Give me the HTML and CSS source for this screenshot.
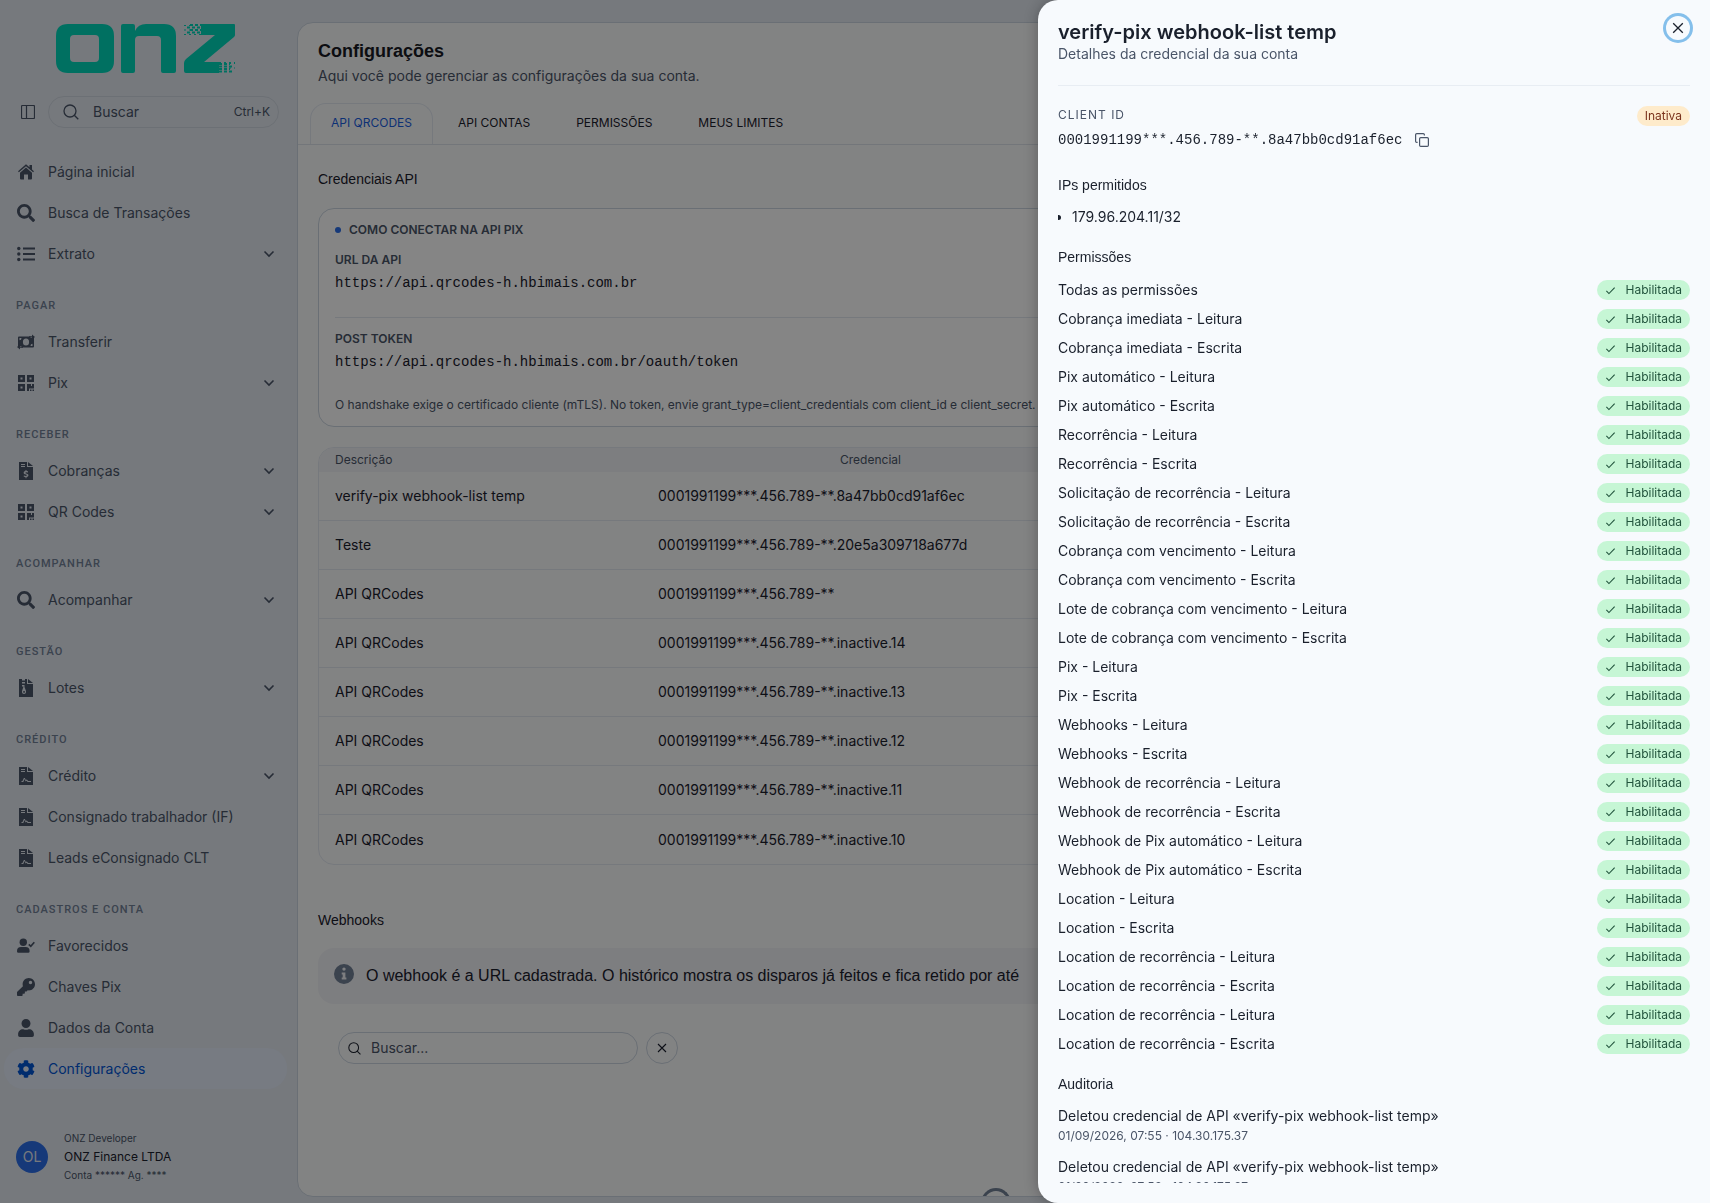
FILE: index.html
```html
<!DOCTYPE html>
<html lang="pt-BR">
<head>
<meta charset="utf-8">
<title>Configurações</title>
<meta name="viewport" content="width=device-width, initial-scale=1">
<link rel="stylesheet" href="styles.css">
</head>
<body>
<svg class="sprite" aria-hidden="true">
  <symbol id="i-search" viewBox="0 0 512 512"><path d="M505 442.700L405.300 343c-4.500-4.500-10.600-7-17-7H372c27.600-35.300 44-79.700 44-128C416 93.100 322.900 0 208 0S0 93.100 0 208s93.100 208 208 208c48.300 0 92.700-16.400 128-44v16.300c0 6.400 2.500 12.500 7 17l99.700 99.700c9.400 9.400 24.600 9.400 33.900 0l28.300-28.300c9.400-9.400 9.400-24.600.1-34zM208 336c-70.700 0-128-57.200-128-128 0-70.700 57.200-128 128-128 70.700 0 128 57.200 128 128 0 70.700-57.200 128-128 128z"/></symbol>
  <symbol id="i-home" viewBox="0 0 18 18"><path d="M9 1.300 1 8.300l.9 1L9 3.200l7.100 6.100.9-1-2-1.800V2h-2.500v2.300z"/><path d="M9 4.500 3 9.700V15.500q0 1 1 1h3v-5h4v5h3q1 0 1-1V9.700z"/></symbol>
  <symbol id="i-list" viewBox="0 0 18 18"><circle cx="1.800" cy="3.500" r="1.700"/><circle cx="1.800" cy="9" r="1.700"/><circle cx="1.800" cy="14.500" r="1.700"/><path d="M6 2.500h12v2H6zM6 8h12v2H6zM6 13.500h12v2H6z"/></symbol>
  <symbol id="i-transfer" viewBox="0 0 18 18"><path fill-rule="evenodd" d="M1 4.500q0-1 1-1h11.500V5H16V3.500l1 .5v9.500q0 1-1 1H4.500V13H2v1.500l-1-.5zm8 1A3.100 3.500 0 1 0 9 12.500 3.100 3.500 0 1 0 9 5.500zM2.500 5v2.200q2 0 2-2.200zM15.500 13v-2.200q-2 0-2 2.200z"/><path d="M15 1.500 18 4l-3 2.300V4.600H12V3.200h3zM3 16.500 0 14l3-2.300v1.700h3v1.400H3z"/></symbol>
  <symbol id="i-qr" viewBox="0 0 18 18"><path fill-rule="evenodd" d="M1 1h7v7H1zm2.500 2.500v2h2v-2zM10 1h7v7h-7zm2.500 2.500v2h2v-2zM1 10h7v7H1zm2.500 2.500v2h2v-2zM10 10h4v2h1v-2h2v4.500h-5V17h-2zM13 15.500h1.500V17H13zM15.500 15.500H17V17h-1.500z"/></symbol>
  <symbol id="i-bill" viewBox="0 0 18 18"><path fill-rule="evenodd" d="M2 0h8v5h6v13H2zM11 0l5 4h-5zM4 2v1h4V2zM4 4v1h4V4zM8.500 8v1Q6.500 9.200 6.600 11q.1 1 2.200 1.500 1.200.3 1 .9-.3.900-3 .1v1.200l1.700.4v1.200h1v-1.200q2-.2 2-2-.1-1.100-2.200-1.600-1.100-.3-1-.8.200-.8 2.700-.1V9.300L9.500 9V8z"/></symbol>
  <symbol id="i-zip" viewBox="0 0 18 18"><path fill-rule="evenodd" d="M2 0h3v1.500h1.500V3H5v1.500h1.500V6H5v1.500h1.500L5 12q-.3 3 2 3t2-3L7.500 8V6H6.500V4.500H8V3H6.500V1.500H8V0h2v5h6v13H2zM11 0l5 4h-5zM6.300 12h1.500v1.700H6.300z"/></symbol>
  <symbol id="i-contract" viewBox="0 0 18 18"><path fill-rule="evenodd" d="M2 0h8v5h6v13H2zM11 0l5 4h-5zM4 2v1h4V2zM4 4v1h4V4zM4.500 14v1h1.800l1.200-3 1.200 2.600.9-.8 1 1.200H14v-1h-2.800l-1.400-1.500-1 .6-1-2.100h-.9L5.500 14z"/></symbol>
  <symbol id="i-usercheck" viewBox="0 0 18 18"><circle cx="6.300" cy="5.300" r="3.700"/><path d="M4 10h4.700q3.900.2 3.900 4v.4q0 1.400-1.400 1.400H1.400Q0 15.800 0 14.400V14q0-3.800 4-4z"/><path d="m11.800 7.300 2 2L17.300 5.200" fill="none" stroke="currentColor" stroke-width="1.700"/></symbol>
  <symbol id="i-key" viewBox="0 0 512 512"><path d="M512 176C512 273.200 433.200 352 336 352c-11.200 0-22.200-1.100-32.800-3.100l-24 27A24 24 0 0 1 261.200 384H224v40c0 13.300-10.700 24-24 24h-40v40c0 13.300-10.700 24-24 24H24c-13.300 0-24-10.700-24-24v-78c0-6.400 2.500-12.500 7-17l161.800-161.800C163.100 213.800 160 195.300 160 176 160 78.800 238.800 0 336 0 433.500 0 512 78.500 512 176zM336 128c0 26.500 21.500 48 48 48s48-21.500 48-48-21.500-48-48-48-48 21.500-48 48z"/></symbol>
  <symbol id="i-user" viewBox="0 0 448 512"><path d="M224 256c70.700 0 128-57.300 128-128S294.700 0 224 0 96 57.300 96 128s57.300 128 128 128zm89.600 32h-16.700c-22.200 10.200-46.900 16-72.900 16s-50.600-5.800-72.900-16h-16.700C60.200 288 0 348.200 0 422.400V464c0 26.500 21.500 48 48 48h352c26.500 0 48-21.500 48-48v-41.600c0-74.200-60.200-134.400-134.400-134.400z"/></symbol>
  <symbol id="i-cog" viewBox="0 0 512 512"><path d="M487.400 315.700l-42.600-24.600c4.300-23.200 4.300-47 0-70.200l42.600-24.600c4.900-2.800 7.100-8.600 5.500-14-11.100-35.600-30-67.800-54.700-94.600-3.800-4.100-10-5.100-14.800-2.300L380.800 110c-17.900-15.400-38.500-27.300-60.800-35.100V25.800c0-5.600-3.900-10.500-9.400-11.700-36.700-8.200-74.300-7.800-109.200 0-5.500 1.200-9.400 6.100-9.400 11.700V75c-22.200 7.900-42.800 19.800-60.800 35.100L88.700 85.500c-4.900-2.800-11-1.900-14.800 2.300-24.700 26.700-43.600 58.900-54.700 94.600-1.700 5.400.6 11.200 5.500 14L67.300 221c-4.300 23.200-4.300 47 0 70.200l-42.600 24.600c-4.900 2.800-7.100 8.600-5.500 14 11.100 35.600 30 67.800 54.700 94.600 3.800 4.100 10 5.100 14.800 2.300l42.600-24.600c17.900 15.400 38.500 27.300 60.800 35.100v49.200c0 5.600 3.900 10.500 9.400 11.700 36.700 8.200 74.300 7.800 109.200 0 5.500-1.200 9.400-6.100 9.400-11.700v-49.200c22.200-7.900 42.800-19.800 60.800-35.100l42.600 24.600c4.900 2.800 11 1.900 14.800-2.300 24.700-26.700 43.600-58.900 54.700-94.600 1.500-5.500-.7-11.300-5.600-14.100zM256 336c-44.100 0-80-35.900-80-80s35.900-80 80-80 80 35.900 80 80-35.900 80-80 80z"/></symbol>
  <symbol id="i-chevron" viewBox="0 0 12 12"><path d="m1.500 3.500 4.500 4.500 4.500-4.500" fill="none" stroke="currentColor" stroke-width="1.600"/></symbol>
  <symbol id="i-lens" viewBox="0 0 16 16"><g fill="none" stroke="currentColor" stroke-width="1.300"><circle cx="7" cy="7" r="6"/><path d="m11.300 11.300 4 4"/></g></symbol>
  <symbol id="i-x" viewBox="0 0 12 12"><path d="m1.200 1.200 9.600 9.600m0-9.600-9.600 9.600" fill="none" stroke="currentColor" stroke-width="1.300"/></symbol>
  <symbol id="i-check" viewBox="0 0 12 12"><path d="m1.500 6.500 2.800 2.800 6.200-6.500" fill="none" stroke="currentColor" stroke-width="1.200"/></symbol>
</svg>

<div class="app">
  <aside class="sidebar">
    <svg class="logo" viewBox="0 0 180 49" role="img" aria-label="onz">
      <path fill-rule="evenodd" d="M12 0H46Q58 0 58 12V37Q58 49 46 49H12Q0 49 0 37V12Q0 0 12 0zM18 11Q14 11 14 15V34Q14 38 18 38H39Q43 38 43 34V15Q43 11 39 11z"/>
      <path d="M67 0H77Q79 0 79 2V7Q82 0 90 0H108Q120 0 120 12V47Q120 49 118 49H107Q105 49 105 47V16Q105 12 101 12H83Q79 12 79 16V47Q79 49 77 49H67Q65 49 65 47V2Q65 0 67 0z"/>
      <path d="M145 0H178Q179 0 179 1V11Q179 12 178 13L148 38H163V49H130Q128 49 128 47V39Q128 37 130 35L159 11H145z"/>
      <path class="dots" d="M134 1H146M131 3.500H146M134 6H146M131 8.500H146M163 40H174M163 42.500H177M163 45H174M163 47.500H177"/>
      <path class="dots sparse" d="M128 1.500H134M128 6H134M128 10.500H146M173 39.500H179M173 44H179M163 38.500H179"/>
    </svg>
    <div class="sidebar-tools">
      <button class="icon-btn" aria-label="Recolher menu"><svg class="line" width="14" height="14" viewBox="0 0 14 14"><rect x=".5" y=".5" width="13" height="13" rx="1"/><path d="M5.500 0v14"/></svg></button>
      <button class="quick-search"><svg width="16" height="16"><use href="#i-lens"/></svg><span class="quick-label">Buscar</span><kbd>Ctrl+K</kbd></button>
    </div>
    <nav class="menu">
      <a class="item" href="#"><svg><use href="#i-home"/></svg>Página inicial</a>
      <a class="item" href="#"><svg><use href="#i-search"/></svg>Busca de Transações</a>
      <a class="item" href="#"><svg><use href="#i-list"/></svg>Extrato<svg class="chev"><use href="#i-chevron"/></svg></a>
      <h2 class="group">PAGAR</h2>
      <a class="item" href="#"><svg><use href="#i-transfer"/></svg>Transferir</a>
      <a class="item" href="#"><svg><use href="#i-qr"/></svg>Pix<svg class="chev"><use href="#i-chevron"/></svg></a>
      <h2 class="group">RECEBER</h2>
      <a class="item" href="#"><svg><use href="#i-bill"/></svg>Cobranças<svg class="chev"><use href="#i-chevron"/></svg></a>
      <a class="item" href="#"><svg><use href="#i-qr"/></svg>QR Codes<svg class="chev"><use href="#i-chevron"/></svg></a>
      <h2 class="group">ACOMPANHAR</h2>
      <a class="item" href="#"><svg><use href="#i-search"/></svg>Acompanhar<svg class="chev"><use href="#i-chevron"/></svg></a>
      <h2 class="group">GESTÃO</h2>
      <a class="item" href="#"><svg><use href="#i-zip"/></svg>Lotes<svg class="chev"><use href="#i-chevron"/></svg></a>
      <h2 class="group">CRÉDITO</h2>
      <a class="item" href="#"><svg><use href="#i-contract"/></svg>Crédito<svg class="chev"><use href="#i-chevron"/></svg></a>
      <a class="item" href="#"><svg><use href="#i-contract"/></svg>Consignado trabalhador (IF)</a>
      <a class="item" href="#"><svg><use href="#i-contract"/></svg>Leads eConsignado CLT</a>
      <h2 class="group">CADASTROS E CONTA</h2>
      <a class="item" href="#"><svg><use href="#i-usercheck"/></svg>Favorecidos</a>
      <a class="item" href="#"><svg><use href="#i-key"/></svg>Chaves Pix</a>
      <a class="item" href="#"><svg><use href="#i-user"/></svg>Dados da Conta</a>
      <a class="item active" href="#" aria-current="page"><svg><use href="#i-cog"/></svg>Configurações</a>
    </nav>
    <div class="account">
      <span class="avatar">OL</span>
      <div class="account-text">
        <span class="account-small">ONZ Developer</span>
        <span class="account-name">ONZ Finance LTDA</span>
        <span class="account-small">Conta ****** Ag. ****</span>
      </div>
    </div>
  </aside>

  <main class="content">
    <header class="page-head">
      <h1>Configurações</h1>
      <p>Aqui você pode gerenciar as configurações da sua conta.</p>
    </header>
    <div class="tabs" role="tablist">
      <button class="tab selected" role="tab" aria-selected="true">API QRCODES</button>
      <button class="tab" role="tab">API CONTAS</button>
      <button class="tab" role="tab">PERMISSÕES</button>
      <button class="tab" role="tab">MEUS LIMITES</button>
    </div>
    <section class="section">
      <h3 class="section-title">Credenciais API</h3>
      <div class="connect">
        <h4 class="connect-title">COMO CONECTAR NA API PIX</h4>
        <h5 class="connect-label">URL DA API</h5>
        <code>https://api.qrcodes-h.hbimais.com.br</code>
        <hr>
        <h5 class="connect-label">POST TOKEN</h5>
        <code>https://api.qrcodes-h.hbimais.com.br/oauth/token</code>
        <p class="connect-note">O handshake exige o certificado cliente (mTLS). No token, envie grant_type=client_credentials com client_id e client_secret.</p>
      </div>
      <div class="table-wrap">
        <table>
          <thead><tr><th class="col-desc">Descrição</th><th class="col-cred">Credencial</th><th></th></tr></thead>
          <tbody>
            <tr><td>verify-pix webhook-list temp</td><td>0001991199***.456.789-**.8a47bb0cd91af6ec</td><td></td></tr>
            <tr><td>Teste</td><td>0001991199***.456.789-**.20e5a309718a677d</td><td></td></tr>
            <tr><td>API QRCodes</td><td>0001991199***.456.789-**</td><td></td></tr>
            <tr><td>API QRCodes</td><td>0001991199***.456.789-**.inactive.14</td><td></td></tr>
            <tr><td>API QRCodes</td><td>0001991199***.456.789-**.inactive.13</td><td></td></tr>
            <tr><td>API QRCodes</td><td>0001991199***.456.789-**.inactive.12</td><td></td></tr>
            <tr><td>API QRCodes</td><td>0001991199***.456.789-**.inactive.11</td><td></td></tr>
            <tr><td>API QRCodes</td><td>0001991199***.456.789-**.inactive.10</td><td></td></tr>
          </tbody>
        </table>
      </div>
    </section>
    <section class="section webhooks">
      <h3 class="section-title">Webhooks</h3>
      <div class="notice">
        <svg width="20" height="20" viewBox="0 0 20 20"><path fill-rule="evenodd" d="M10 0a10 10 0 1 0 0 20 10 10 0 1 0 0-20zM10 3.400a1.700 1.700 0 1 1 0 3.400 1.700 1.700 0 1 1 0-3.400zM7.700 8.500h3.700v5h1v2H7.700v-2h1v-3h-1z"/></svg>
        <p>O webhook é a URL cadastrada. O histórico mostra os disparos já feitos e fica retido por até</p>
      </div>
      <div class="filter">
        <label class="filter-field"><svg width="13" height="13"><use href="#i-lens"/></svg><input type="text" placeholder="Buscar..." aria-label="Buscar webhooks"></label>
        <button class="round" aria-label="Limpar busca"><svg width="10" height="10"><use href="#i-x"/></svg></button>
      </div>
      <div class="spinner" role="status" aria-label="Carregando"></div>
    </section>
  </main>
</div>

<div class="overlay"></div>

<aside class="drawer" role="dialog" aria-modal="true" aria-labelledby="drawer-title">
  <header class="drawer-head">
    <div>
      <h2 id="drawer-title">verify-pix webhook-list temp</h2>
      <p>Detalhes da credencial da sua conta</p>
    </div>
    <button class="close" aria-label="Fechar"><svg width="12" height="12"><use href="#i-x"/></svg></button>
  </header>
  <div class="drawer-body">
    <div class="client">
      <div>
        <span class="client-label">CLIENT ID</span>
        <div class="client-row"><code>0001991199***.456.789-**.8a47bb0cd91af6ec</code><button class="icon-btn" aria-label="Copiar"><svg class="line" width="14" height="14" viewBox="0 0 14 14"><rect x="4.600" y="4.600" width="8.800" height="8.800" rx="1.200"/><path d="M2.600 9.400H1.800q-1.200 0-1.200-1.200V1.800q0-1.200 1.200-1.200h6.400q1.200 0 1.200 1.200v.8"/></svg></button></div>
      </div>
      <span class="badge warn">Inativa</span>
    </div>
    <h3 class="drawer-title">IPs permitidos</h3>
    <ul class="ips"><li>179.96.204.11/32</li></ul>
    <h3 class="drawer-title">Permissões</h3>
    <ul class="perms">
      <li>Todas as permissões<span class="badge ok"><svg><use href="#i-check"/></svg>Habilitada</span></li>
      <li>Cobrança imediata - Leitura<span class="badge ok"><svg><use href="#i-check"/></svg>Habilitada</span></li>
      <li>Cobrança imediata - Escrita<span class="badge ok"><svg><use href="#i-check"/></svg>Habilitada</span></li>
      <li>Pix automático - Leitura<span class="badge ok"><svg><use href="#i-check"/></svg>Habilitada</span></li>
      <li>Pix automático - Escrita<span class="badge ok"><svg><use href="#i-check"/></svg>Habilitada</span></li>
      <li>Recorrência - Leitura<span class="badge ok"><svg><use href="#i-check"/></svg>Habilitada</span></li>
      <li>Recorrência - Escrita<span class="badge ok"><svg><use href="#i-check"/></svg>Habilitada</span></li>
      <li>Solicitação de recorrência - Leitura<span class="badge ok"><svg><use href="#i-check"/></svg>Habilitada</span></li>
      <li>Solicitação de recorrência - Escrita<span class="badge ok"><svg><use href="#i-check"/></svg>Habilitada</span></li>
      <li>Cobrança com vencimento - Leitura<span class="badge ok"><svg><use href="#i-check"/></svg>Habilitada</span></li>
      <li>Cobrança com vencimento - Escrita<span class="badge ok"><svg><use href="#i-check"/></svg>Habilitada</span></li>
      <li>Lote de cobrança com vencimento - Leitura<span class="badge ok"><svg><use href="#i-check"/></svg>Habilitada</span></li>
      <li>Lote de cobrança com vencimento - Escrita<span class="badge ok"><svg><use href="#i-check"/></svg>Habilitada</span></li>
      <li>Pix - Leitura<span class="badge ok"><svg><use href="#i-check"/></svg>Habilitada</span></li>
      <li>Pix - Escrita<span class="badge ok"><svg><use href="#i-check"/></svg>Habilitada</span></li>
      <li>Webhooks - Leitura<span class="badge ok"><svg><use href="#i-check"/></svg>Habilitada</span></li>
      <li>Webhooks - Escrita<span class="badge ok"><svg><use href="#i-check"/></svg>Habilitada</span></li>
      <li>Webhook de recorrência - Leitura<span class="badge ok"><svg><use href="#i-check"/></svg>Habilitada</span></li>
      <li>Webhook de recorrência - Escrita<span class="badge ok"><svg><use href="#i-check"/></svg>Habilitada</span></li>
      <li>Webhook de Pix automático - Leitura<span class="badge ok"><svg><use href="#i-check"/></svg>Habilitada</span></li>
      <li>Webhook de Pix automático - Escrita<span class="badge ok"><svg><use href="#i-check"/></svg>Habilitada</span></li>
      <li>Location - Leitura<span class="badge ok"><svg><use href="#i-check"/></svg>Habilitada</span></li>
      <li>Location - Escrita<span class="badge ok"><svg><use href="#i-check"/></svg>Habilitada</span></li>
      <li>Location de recorrência - Leitura<span class="badge ok"><svg><use href="#i-check"/></svg>Habilitada</span></li>
      <li>Location de recorrência - Escrita<span class="badge ok"><svg><use href="#i-check"/></svg>Habilitada</span></li>
      <li>Location de recorrência - Leitura<span class="badge ok"><svg><use href="#i-check"/></svg>Habilitada</span></li>
      <li>Location de recorrência - Escrita<span class="badge ok"><svg><use href="#i-check"/></svg>Habilitada</span></li>
    </ul>
    <h3 class="drawer-title">Auditoria</h3>
    <ul class="audit">
      <li>Deletou credencial de API «verify-pix webhook-list temp»<small>01/09/2026, 07:55 · 104.30.175.37</small></li>
      <li>Deletou credencial de API «verify-pix webhook-list temp»<small>01/09/2026, 07:52 · 104.30.175.37</small></li>
    </ul>
  </div>
</aside>
</body>
</html>
```
FILE: styles.css
```css
* { box-sizing: border-box; }
body, h1, h2, h3, h4, h5, p, ul { margin: 0; padding: 0; }
ul { list-style: none; }
:root { --heading: "Liberation Sans", Arial, sans-serif; }
body {
  height: 100vh;
  overflow: hidden;
  background: #e2e8f0;
  color: #1a202c;
  font-family: Inter, "Liberation Sans", sans-serif;
  font-size: 14px;
  line-height: 20px;
}
button, input { font: inherit; color: inherit; background: none; border: 0; padding: 0; }
a { color: inherit; text-decoration: none; }
svg { fill: currentColor; flex: none; display: block; }
svg.line { fill: none; stroke: currentColor; stroke-width: 1.2; }
code { font-family: "Liberation Mono", monospace; font-size: 14px; line-height: 20px; }
.sprite { position: absolute; width: 0; height: 0; }

.app { display: grid; grid-template-columns: 297px 1fr; height: 100vh; padding: 22px 16px 6px 0; }

/* Sidebar */
.sidebar { display: flex; flex-direction: column; color: #4a5568; }
.logo { width: 180px; height: 49px; margin: 2px 0 0 56px; fill: #00d7bb; }
.dots { fill: none; stroke: #00d7bb; stroke-width: 2; stroke-dasharray: 3 2; }
.dots.sparse { stroke-width: 1; stroke-dasharray: 2 3; }
.sidebar-tools { display: flex; align-items: center; gap: 13px; margin: 23px 18px 23px 21px; }
.icon-btn { display: flex; }
.quick-search { flex: 1; display: flex; align-items: center; height: 32px; padding: 0 8px 0 14px; border: 1px solid #d0d7e0; border-radius: 16px; }
.quick-label { flex: 1; margin-left: 14px; text-align: left; }
kbd { font-family: inherit; font-size: 12px; }
.menu { padding: 0 10px 0 4px; }
.item { display: flex; align-items: center; gap: 13px; height: 41px; padding: 0 12px 0 13px; border-radius: 20px; }
.item svg { width: 18px; height: 18px; }
.item .chev { width: 12px; height: 12px; margin-left: auto; }
.item.active { background: #e4ebfa; color: #0055d4; }
.group { margin: 24px 0 7px 12px; font-family: Roboto, sans-serif; font-size: 11px; line-height: 16px; font-weight: 500; letter-spacing: 1px; color: #718096; }
.account { display: flex; align-items: center; gap: 16px; margin: auto 16px 13px; }
.avatar { width: 32px; height: 32px; border-radius: 50%; background: #2b6ee8; color: #e2e8f0; line-height: 32px; text-align: center; }
.account-text { display: flex; flex-direction: column; font-size: 12px; line-height: 20px; color: #1a202c; }
.account-small { font-size: 10px; line-height: 17px; color: #4a5568; }

/* Main card */
.content { min-width: 0; overflow: hidden; background: #fafbfc; border: 1px solid #cbd5e0; border-radius: 16px; }
.page-head { padding: 16px 20px 17px; }
.page-head h1 { font-family: var(--heading); font-size: 18px; line-height: 24px; font-weight: 700; color: #171923; }
.page-head p { margin-top: 3px; color: #4a5568; }
.tabs { display: flex; gap: 4px; padding: 0 12px; border-bottom: 1px solid #dde2ea; }
.tab { height: 41px; padding: 0 20px 2px; border: 1px solid transparent; border-bottom: 0; border-radius: 16px 16px 0 0; font-size: 12px; }
.tab.selected { border-color: #e2e8f0; color: #1a5fe0; }
.section { padding: 24px 20px 0; }
.section-title, .drawer-title { font-family: var(--heading); font-size: 14px; line-height: 20px; font-weight: 400; }
.connect { margin-top: 19px; padding: 11px 16px 12px; background: #fff; border: 1px solid #cbd5e0; border-radius: 16px; }
.connect-title, .connect-label { font-size: 12px; line-height: 20px; font-weight: 600; color: #4a5568; }
.connect-title { display: flex; align-items: center; gap: 8px; margin-bottom: 10px; }
.connect-title::before { content: ""; width: 6px; height: 6px; border-radius: 50%; background: #2b6ee8; }
.connect-label { margin-bottom: 3px; }
.connect code { display: block; }
.connect hr { margin: 24px 0 11px; border: 0; border-top: 1px solid #e2e8f0; }
.connect-note { margin-top: 24px; font-size: 12px; line-height: 18px; color: #4a5568; }
.table-wrap { margin-top: 20px; overflow: hidden; border: 1px solid #e2e8f0; border-radius: 16px; }
table { width: 100%; border-collapse: separate; border-spacing: 0; table-layout: fixed; }
th { height: 24px; padding: 0 16px; background: #f0f1f5; font-size: 12px; line-height: 20px; font-weight: 400; color: #4a5568; }
.col-desc { width: 323px; text-align: left; }
.col-cred { width: 457px; }
td { height: 49px; padding: 0 16px; border-bottom: 1px solid #e2e8f0; }
tbody tr:last-child td { border-bottom: 0; }
.webhooks { padding-top: 45px; }
.notice { display: flex; gap: 12px; margin-top: 18px; padding: 16px; background: #f0f1f5; border-radius: 16px; font-family: var(--heading); font-size: 16px; line-height: 24px; }
.notice svg { color: #718096; }
.filter { display: flex; gap: 8px; margin: 28px 0 0 20px; }
.filter-field { display: flex; align-items: center; gap: 10px; width: 300px; height: 32px; padding: 0 9px; border: 1px solid #cbd5e0; border-radius: 16px; }
.filter-field input { flex: 1; min-width: 0; outline: 0; }
.filter-field input::placeholder { color: #4a5568; opacity: 1; }
.round { display: grid; place-items: center; width: 32px; height: 32px; border: 1px solid #cbd5e0; border-radius: 50%; }
.spinner { width: 30px; height: 30px; margin: 124px auto 0; border: 3px solid #718096; border-bottom-color: transparent; border-radius: 50%; }

/* Drawer */
.overlay { position: fixed; inset: 0; background: rgba(0, 0, 0, .48); }
.drawer { position: fixed; top: 0; right: 0; bottom: 0; width: 672px; display: flex; flex-direction: column; padding: 20px; background: #f7fafd; border-radius: 20px 0 0 20px; box-shadow: 0 0 16px rgba(0, 0, 0, .3); }
.drawer-head { display: flex; justify-content: space-between; align-items: flex-start; padding-bottom: 21px; border-bottom: 1px solid #e8edf3; }
.drawer-head h2 { font-size: 20px; line-height: 24px; font-weight: 600; }
.drawer-head p { color: #4a5568; }
.close { display: grid; place-items: center; width: 24px; height: 24px; margin: -4px 0 0; border-radius: 50%; box-shadow: 0 0 0 3px #84bfeb; }
.drawer-body { flex: 1; min-height: 0; overflow-y: auto; scrollbar-width: none; padding-top: 20px; }
.client { display: flex; justify-content: space-between; align-items: flex-start; margin-bottom: 25px; }
.client-label { display: block; margin-bottom: 6px; font-size: 12px; line-height: 18px; letter-spacing: 1px; color: #4a5568; }
.client-row { display: flex; align-items: center; gap: 13px; }
.client-row .icon-btn { color: #4a5568; }
.badge { display: inline-flex; align-items: center; height: 20px; padding: 0 8px; border-radius: 10px; font-size: 12px; line-height: 20px; }
.warn { background: #feebcb; color: #7b341e; }
.ok { gap: 9px; background: #c6f6d5; color: #22543d; }
.ok svg { width: 11px; height: 11px; }
.ips { margin: 12px 0 20px; padding-left: 14px; list-style: disc; }
.perms { display: flex; flex-direction: column; gap: 9px; margin: 13px 0 20px; }
.perms li { display: flex; justify-content: space-between; align-items: center; height: 20px; }
.audit { display: flex; flex-direction: column; gap: 12px; margin-top: 12px; }
.audit small { display: block; margin-top: 1px; font-size: 12px; line-height: 18px; color: #4a5568; }
```
